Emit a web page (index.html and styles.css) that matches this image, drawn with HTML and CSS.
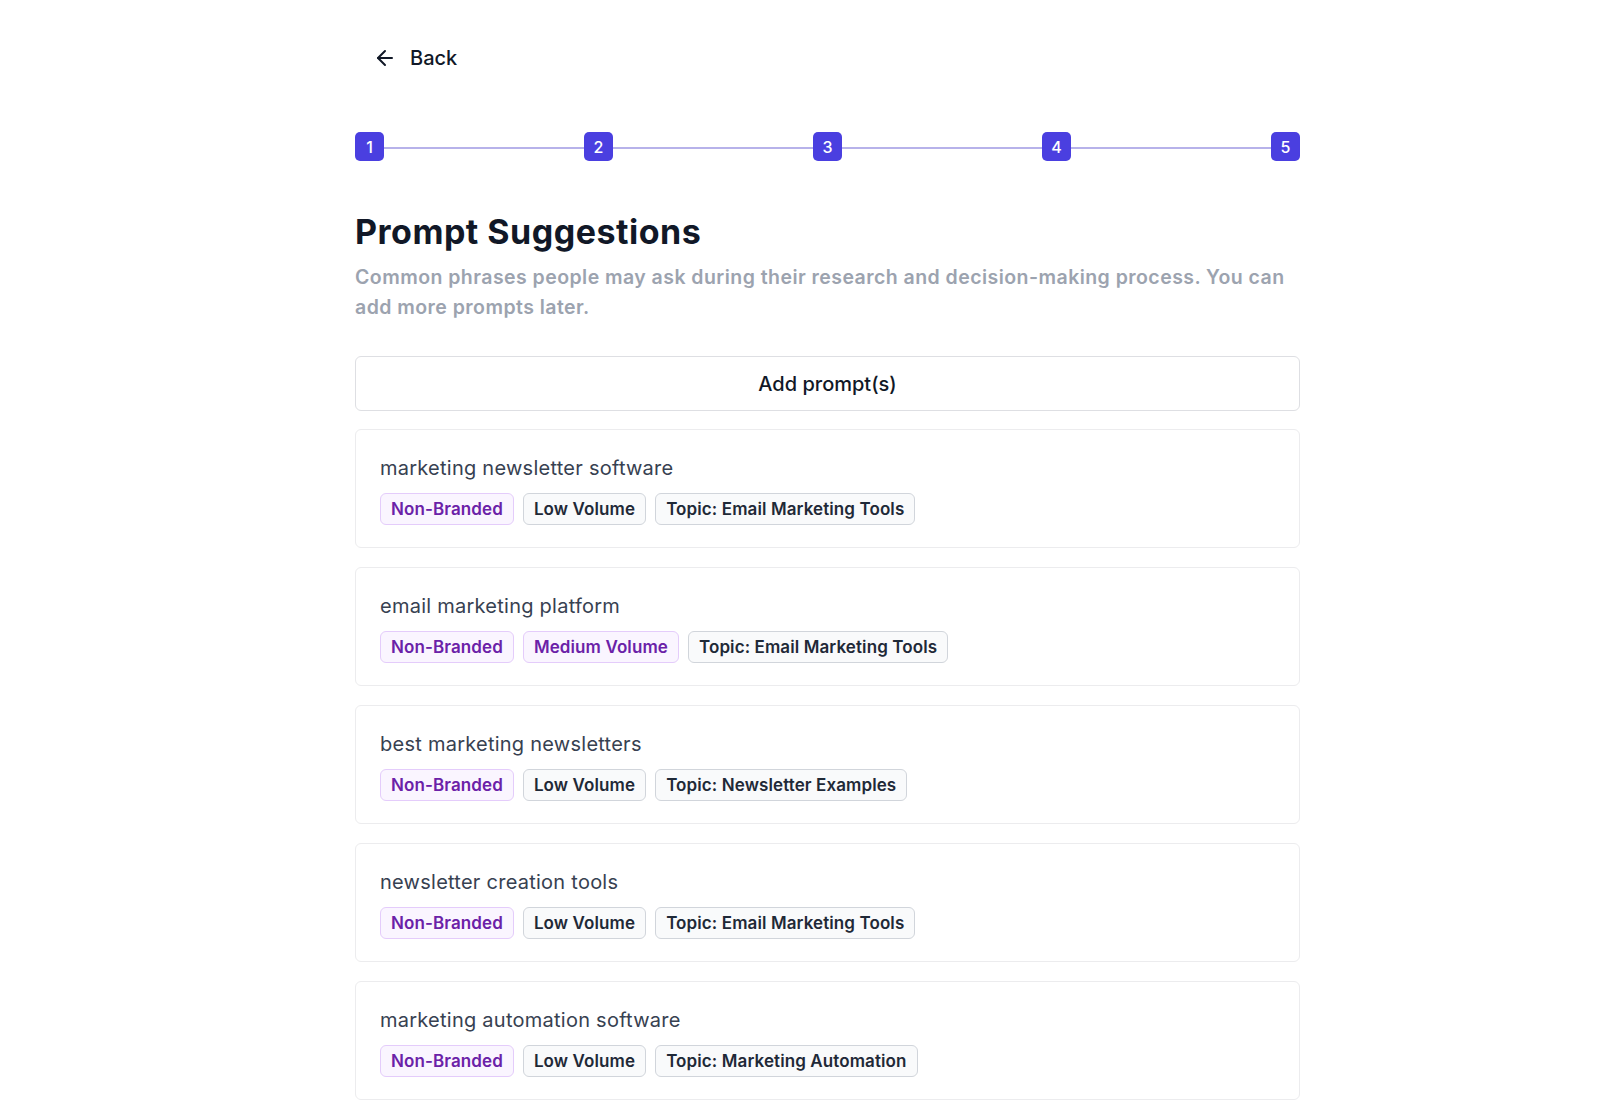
FILE: index.html
```html
<!DOCTYPE html>
<html lang="en">
<head>
<meta charset="utf-8">
<title>Prompt Suggestions</title>
<link rel="stylesheet" href="styles.css">
</head>
<body>
<div class="page">
  <a class="back" href="#">
    <svg class="back-icon" viewBox="0 0 24 24" width="24" height="24" fill="none" stroke="currentColor" stroke-width="2" stroke-linecap="round" stroke-linejoin="round"><path d="M19 12H5"/><path d="M12 19l-7-7 7-7"/></svg>
    <span>Back</span>
  </a>

  <div class="steps">
    <div class="step">1</div>
    <div class="step-line"></div>
    <div class="step">2</div>
    <div class="step-line"></div>
    <div class="step">3</div>
    <div class="step-line"></div>
    <div class="step">4</div>
    <div class="step-line"></div>
    <div class="step">5</div>
  </div>

  <h1 class="title">Prompt Suggestions</h1>
  <p class="desc">Common phrases people may ask during their research and decision-making process. You can add more prompts later.</p>

  <button class="add-btn" type="button">Add prompt(s)</button>

  <div class="cards">
    <div class="card">
      <div class="prompt">marketing newsletter software</div>
      <div class="tags">
        <span class="tag tag-purple">Non-Branded</span>
        <span class="tag tag-gray">Low Volume</span>
        <span class="tag tag-gray">Topic: Email Marketing Tools</span>
      </div>
    </div>
    <div class="card">
      <div class="prompt">email marketing platform</div>
      <div class="tags">
        <span class="tag tag-purple">Non-Branded</span>
        <span class="tag tag-purple">Medium Volume</span>
        <span class="tag tag-gray">Topic: Email Marketing Tools</span>
      </div>
    </div>
    <div class="card">
      <div class="prompt">best marketing newsletters</div>
      <div class="tags">
        <span class="tag tag-purple">Non-Branded</span>
        <span class="tag tag-gray">Low Volume</span>
        <span class="tag tag-gray">Topic: Newsletter Examples</span>
      </div>
    </div>
    <div class="card">
      <div class="prompt">newsletter creation tools</div>
      <div class="tags">
        <span class="tag tag-purple">Non-Branded</span>
        <span class="tag tag-gray">Low Volume</span>
        <span class="tag tag-gray">Topic: Email Marketing Tools</span>
      </div>
    </div>
    <div class="card">
      <div class="prompt">marketing automation software</div>
      <div class="tags">
        <span class="tag tag-purple">Non-Branded</span>
        <span class="tag tag-gray">Low Volume</span>
        <span class="tag tag-gray">Topic: Marketing Automation</span>
      </div>
    </div>
  </div>
</div>
</body>
</html>
```

FILE: styles.css
```css
* { box-sizing: border-box; }

html, body {
  margin: 0;
  padding: 0;
  background: #ffffff;
}

body {
  font-family: Inter, "Noto Sans", "Liberation Sans", sans-serif;
  color: #111827;
}

.page {
  width: 945px;
  margin-left: 355px;
  padding-top: 38px;
}

.back {
  display: flex;
  align-items: center;
  gap: 13px;
  height: 40px;
  padding-left: 18px;
  font-size: 20px;
  font-weight: 500;
  color: #111827;
  text-decoration: none;
}

.back-icon {
  width: 24px;
  height: 24px;
  flex: none;
}

.steps {
  display: flex;
  align-items: center;
  margin-top: 54px;
}

.step {
  width: 29px;
  height: 29px;
  flex: none;
  border-radius: 5px;
  background: #4a3fe0;
  color: #ffffff;
  font-size: 16px;
  font-weight: 500;
  display: flex;
  align-items: center;
  justify-content: center;
}

.step-line {
  flex: 1;
  height: 2px;
  margin-top: 3px;
  background: #b7b2ea;
}

.title {
  margin: 51px 0 0;
  font-size: 34px;
  line-height: 40px;
  font-weight: 700;
  color: #111827;
  letter-spacing: 0.5px;
}

.desc {
  margin: 10px 0 0;
  font-size: 19.5px;
  line-height: 30px;
  font-weight: 600;
  color: #9ca3af;
  letter-spacing: 0.45px;
}

.add-btn {
  display: block;
  width: 100%;
  height: 55px;
  margin-top: 34px;
  border: 1px solid #dedfe3;
  border-radius: 6px;
  background: #ffffff;
  font-family: inherit;
  font-size: 20px;
  font-weight: 500;
  color: #111827;
}

.cards {
  display: flex;
  flex-direction: column;
  gap: 19px;
  margin-top: 18px;
}

.card {
  border: 1px solid #ececee;
  border-radius: 6px;
  padding: 24px 24px 22px;
  display: flex;
  flex-direction: column;
  gap: 11px;
}

.prompt {
  font-size: 20px;
  line-height: 28px;
  color: #374151;
  letter-spacing: 0.25px;
}

.tags {
  display: flex;
  gap: 9px;
}

.tag {
  height: 32px;
  padding: 0 10px;
  display: inline-flex;
  align-items: center;
  border-radius: 6px;
  font-size: 17px;
  font-weight: 600;
  letter-spacing: 0.1px;
}

.tag-purple {
  background: #faf5ff;
  border: 1px solid #e4ccfb;
  color: #6b21a8;
}

.tag-gray {
  background: #f9fafb;
  border: 1px solid #d1d5db;
  color: #1f2937;
}
```
